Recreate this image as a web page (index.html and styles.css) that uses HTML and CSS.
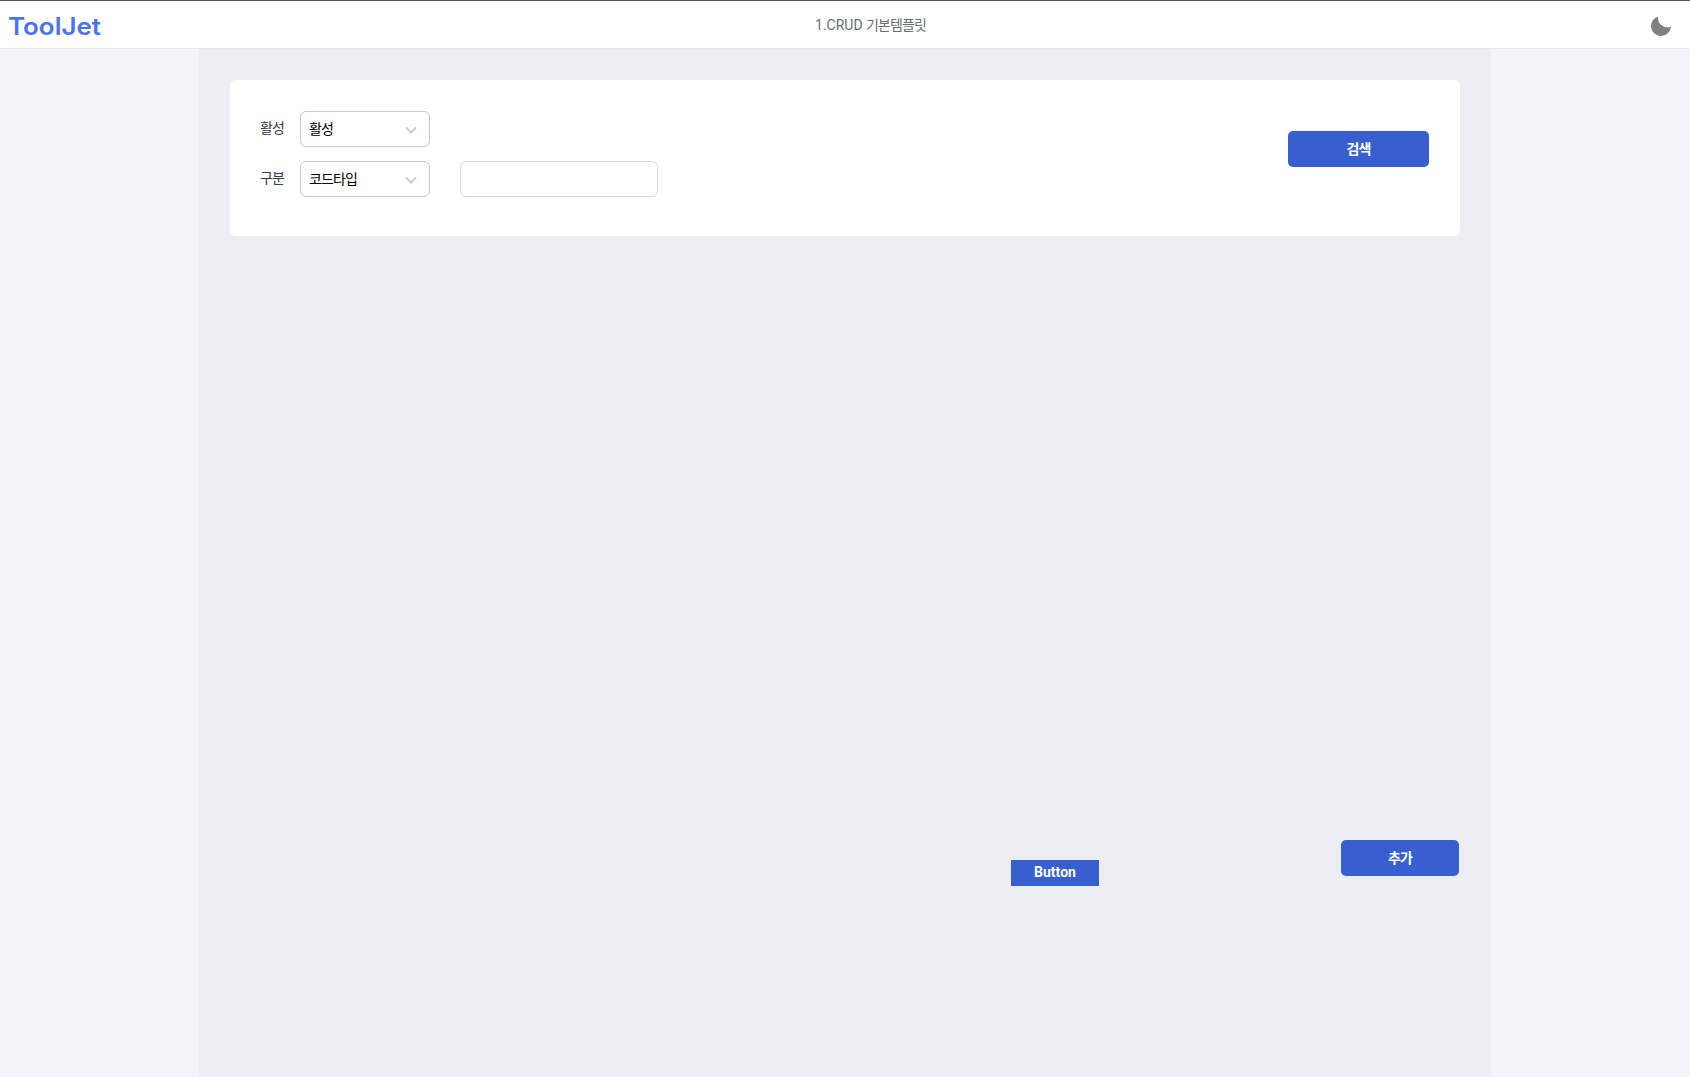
FILE: index.html
```html
<!DOCTYPE html>
<html lang="ko">
<head>
<meta charset="utf-8">
<title>1.CRUD 기본템플릿</title>
<link rel="stylesheet" href="styles.css">
</head>
<body>
<header class="topbar">
  <div class="logo">ToolJet</div>
  <div class="title">1.CRUD <span class="ko">기본템플릿</span></div>
  <svg class="moon" width="20" height="20" viewBox="0 0 20 20" aria-hidden="true"><path d="M7.300.4A10 10 0 1 0 20 10.600 9.200 9.200 0 0 1 7.300.4z" fill="#808080"/></svg>
</header>
<div class="stage">
  <main class="canvas">
    <section class="card">
      <div class="filters">
        <div class="row">
          <span class="label ko">활성</span>
          <div class="select"><span class="ko">활성</span><svg class="chev" width="12" height="8" viewBox="0 0 12 8" aria-hidden="true"><path d="M1 1.500 6 6.500 11 1.500" fill="none" stroke="#ccc" stroke-width="2"/></svg></div>
        </div>
        <div class="row">
          <span class="label ko">구분</span>
          <div class="select"><span class="ko">코드타입</span><svg class="chev" width="12" height="8" viewBox="0 0 12 8" aria-hidden="true"><path d="M1 1.500 6 6.500 11 1.500" fill="none" stroke="#ccc" stroke-width="2"/></svg></div>
          <div class="input"></div>
        </div>
      </div>
      <button class="btn search ko">검색</button>
    </section>
    <div class="actions">
      <button class="btn plain">Button</button>
      <button class="btn add ko">추가</button>
    </div>
  </main>
</div>
</body>
</html>
```
FILE: styles.css
```css
* { box-sizing: border-box; }
html, body { height: 100%; }
body {
  margin: 0;
  display: flex;
  flex-direction: column;
  height: 1077px;
  overflow: hidden;
  background: #f4f5fa;
  font-family: Roboto, "Noto Sans CJK KR", sans-serif;
  font-size: 14px;
}
.ko { letter-spacing: -0.9px; }
.topbar {
  height: 49px;
  flex: none;
  display: flex;
  align-items: center;
  justify-content: space-between;
  position: relative;
  padding: 0 19px 0 8px;
  background: #fff;
  border-top: 1px solid #5a5a5a;
  border-bottom: 1px solid #e6e8ee;
}
.logo {
  font-family: Inter, sans-serif;
  font-weight: 600;
  font-size: 24px;
  line-height: 1;
  color: #4a72f5;
  margin-top: 4px;
  transform: scaleX(1.08);
  transform-origin: left center;
}
.title {
  position: absolute;
  left: 815px;
  top: 16px;
  line-height: 17px;
  color: #687076;
}
.moon { display: block; margin-top: 2px; }
.stage { flex: 1; display: flex; padding-left: 199px; }
.canvas {
  width: 1292px;
  padding: 31px 31px 0;
  background: #edeef3;
  display: flex;
  flex-direction: column;
}
.card {
  height: 156px;
  background: #fff;
  border-radius: 6px;
  display: flex;
  justify-content: space-between;
  align-items: flex-start;
  padding: 31px 31px 0 30px;
}
.filters { display: flex; flex-direction: column; gap: 14px; }
.row { display: flex; align-items: flex-start; }
.label {
  width: 40px;
  line-height: 34px;
  color: #2f3c4c;
}
.select {
  width: 130px;
  height: 36px;
  border: 1px solid #c9c9c9;
  border-radius: 6px;
  background: #fff;
  color: #000;
  display: flex;
  align-items: center;
  justify-content: space-between;
  padding: 0 12px 2px 8px;
}
.input {
  width: 198px;
  height: 36px;
  margin-left: 30px;
  border: 1px solid #dadada;
  border-radius: 6px;
  background: #fff;
}
.chev { display: block; margin-top: 4px; }
.btn {
  border: 0;
  padding: 0 0 2px;
  background: #375fcf;
  color: #fff;
  font-family: inherit;
  font-size: 14px;
  font-weight: 600;
}
.search { width: 141px; height: 36px; border-radius: 5px; margin-top: 20px; }
.actions {
  display: flex;
  justify-content: flex-end;
  align-items: flex-start;
  margin-top: 604px;
  padding-right: 1px;
}
.plain { width: 88px; height: 26px; margin-top: 20px; margin-right: 242px; font-weight: 700; }
.add { width: 118px; height: 36px; border-radius: 5px; }
```
